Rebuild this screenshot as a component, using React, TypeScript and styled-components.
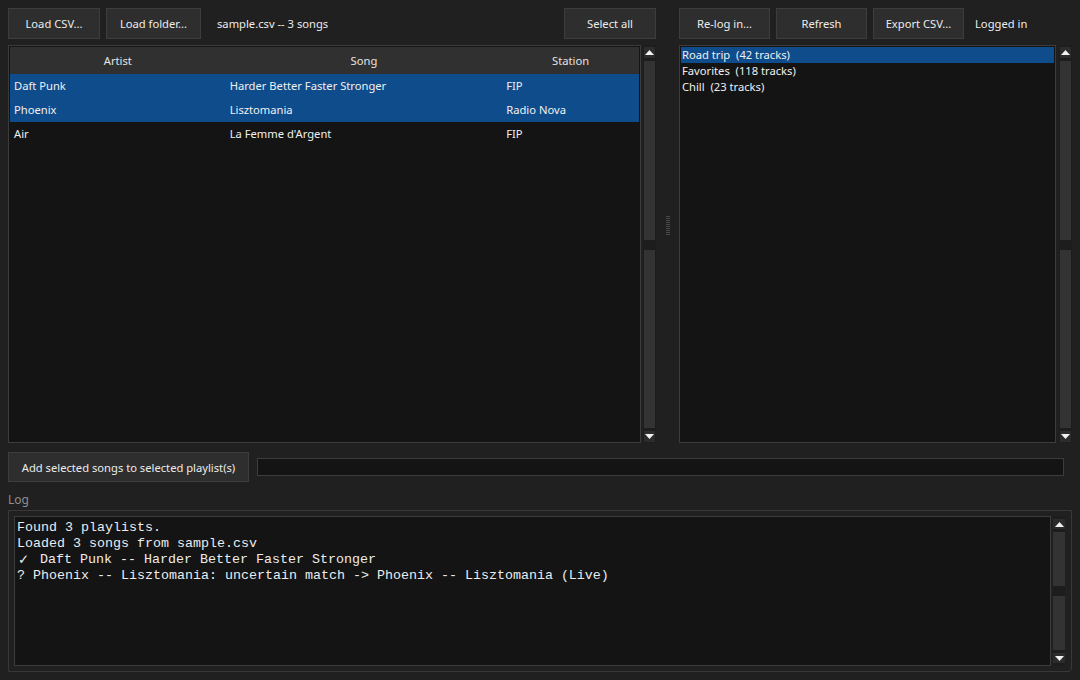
import styled, { createGlobalStyle } from "styled-components";

const GlobalStyle = createGlobalStyle`
  html, body {
    margin: 0;
    padding: 0;
    background: #202020;
  }
  body {
    font-family: "Noto Sans", "Open Sans", sans-serif;
    font-size: 11.2px;
    color: #e8e8e8;
  }
`;

const songs = [
  { artist: "Daft Punk", song: "Harder Better Faster Stronger", station: "FIP", selected: true },
  { artist: "Phoenix", song: "Lisztomania", station: "Radio Nova", selected: true },
  { artist: "Air", song: "La Femme d'Argent", station: "FIP", selected: false },
];

const playlists = [
  { name: "Road trip  (42 tracks)", selected: true },
  { name: "Favorites  (118 tracks)", selected: false },
  { name: "Chill  (23 tracks)", selected: false },
];

const columns = [
  { title: "Artist", width: 216, key: "artist" },
  { title: "Song", width: 277, key: "song" },
  { title: "Station", width: 137, key: "station" },
];

export default function App() {
  return (
    <>
      <GlobalStyle />
      <Window>
        <Panes>
          <Pane $width={648}>
            <Toolbar>
              <Button $width={92}>Load CSV...</Button>
              <Button $width={95}>Load folder...</Button>
              <StatusText $gap={16}>sample.csv -- 3 songs</StatusText>
              <Spacer />
              <Button $width={92}>Select all</Button>
            </Toolbar>
            <ListArea>
              <Frame>
                <HeaderRow>
                  {columns.map((c) => (
                    <HeaderCell key={c.key} $width={c.width}>
                      {c.title}
                    </HeaderCell>
                  ))}
                </HeaderRow>
                {songs.map((s) => (
                  <Row key={s.artist} $selected={s.selected}>
                    {columns.map((c) => (
                      <Cell key={c.key} $width={c.width}>
                        {s[c.key]}
                      </Cell>
                    ))}
                  </Row>
                ))}
              </Frame>
              <Scrollbar />
            </ListArea>
          </Pane>

          <Sash>
            <Grip />
          </Sash>

          <Pane $width={393}>
            <Toolbar>
              <Button $width={91}>Re-log in...</Button>
              <Button $width={91} $gap={7}>Refresh</Button>
              <Button $width={91} $gap={7}>Export CSV...</Button>
              <StatusText $gap={11}>Logged in</StatusText>
            </Toolbar>
            <ListArea $gap={3}>
              <Frame>
                {playlists.map((p) => (
                  <ListItem key={p.name} $selected={p.selected}>
                    {p.name}
                  </ListItem>
                ))}
              </Frame>
              <Scrollbar />
            </ListArea>
          </Pane>
        </Panes>

        <ActionRow>
          <Button $width={241} $height={30}>
            Add selected songs to selected playlist(s)
          </Button>
          <Progress />
        </ActionRow>

        <LogLabel>Log</LogLabel>
        <LogFrame>
          <LogText>
            <LogLine>Found 3 playlists.</LogLine>
            <LogLine>Loaded 3 songs from sample.csv</LogLine>
            <LogLine>
              <CheckMark>{"\u2713"}</CheckMark>
              {" Daft Punk -- Harder Better Faster Stronger"}
            </LogLine>
            <LogLine>? Phoenix -- Lisztomania: uncertain match -&gt; Phoenix -- Lisztomania (Live)</LogLine>
          </LogText>
          <Scrollbar $small />
        </LogFrame>
      </Window>
    </>
  );
}

function Scrollbar({ $small }: { $small?: boolean }) {
  return (
    <Track $small={$small}>
      <Arrow $small={$small}>
        <svg width="9" height="5" viewBox="0 0 9 5">
          <path d="M0 5 L4.5 0 L9 5 Z" fill="#f2f2f2" />
        </svg>
      </Arrow>
      <Segment />
      <SegmentGap />
      <Segment />
      <Arrow $small={$small}>
        <svg width="9" height="5" viewBox="0 0 9 5">
          <path d="M0 0 L4.5 5 L9 0 Z" fill="#f2f2f2" />
        </svg>
      </Arrow>
    </Track>
  );
}

const Window = styled.div`
  width: 1080px;
  height: 680px;
  box-sizing: border-box;
  padding: 8px;
  display: flex;
  flex-direction: column;
  overflow: hidden;
`;

const Panes = styled.div`
  display: flex;
  height: 435px;
`;

const Pane = styled.div<{ $width: number }>`
  width: ${(p) => p.$width}px;
  display: flex;
  flex-direction: column;
  gap: 6px;
`;

const Toolbar = styled.div`
  display: flex;
  align-items: center;
  height: 31px;
  flex-shrink: 0;
`;

const Button = styled.div<{ $width: number; $height?: number; $gap?: number }>`
  width: ${(p) => p.$width}px;
  height: ${(p) => p.$height ?? 31}px;
  box-sizing: border-box;
  border: 1px solid #3d3d3d;
  background: #2e2e2e;
  display: flex;
  align-items: center;
  justify-content: center;
  white-space: nowrap;
  color: #ececec;
  flex-shrink: 0;
  & + & {
    margin-left: ${(p) => p.$gap ?? 6}px;
  }
`;

const StatusText = styled.span<{ $gap: number }>`
  margin-left: ${(p) => p.$gap}px;
  white-space: nowrap;
  color: #ececec;
`;

const Spacer = styled.div`
  flex: 1;
`;

const ListArea = styled.div<{ $gap?: number }>`
  flex: 1;
  display: flex;
  gap: ${(p) => p.$gap ?? 2}px;
  min-height: 0;
`;

const Frame = styled.div`
  flex: 1;
  box-sizing: border-box;
  border: 1px solid #3c3c3c;
  background: #141414;
  padding: 1px;
  overflow: hidden;
`;

const HeaderRow = styled.div`
  display: flex;
  height: 27px;
  background: #303030;
`;

const HeaderCell = styled.div<{ $width: number }>`
  width: ${(p) => p.$width}px;
  display: flex;
  align-items: center;
  justify-content: center;
  color: #e4e4e4;
`;

const Row = styled.div<{ $selected: boolean }>`
  display: flex;
  height: 24px;
  background: ${(p) => (p.$selected ? "#0f4c8b" : "transparent")};
`;

const Cell = styled.div<{ $width: number }>`
  width: ${(p) => p.$width}px;
  box-sizing: border-box;
  padding-left: 4px;
  padding-bottom: 1px;
  display: flex;
  align-items: center;
  white-space: nowrap;
  color: #f0f0f0;
`;

const ListItem = styled.div<{ $selected: boolean }>`
  height: 16px;
  line-height: 16px;
  padding-left: 1px;
  white-space: pre;
  color: #f0f0f0;
  background: ${(p) => (p.$selected ? "#0f4c8b" : "transparent")};
`;

const Track = styled.div<{ $small?: boolean }>`
  width: ${(p) => (p.$small ? 12 : 13)}px;
  box-sizing: border-box;
  padding: ${(p) => (p.$small ? "3px 0 3px 0" : "2px 1px 1px 1px")};
  display: flex;
  flex-direction: column;
  gap: 3px;
  flex-shrink: 0;
  background: #1d1d1d;
`;

const Arrow = styled.div<{ $small?: boolean }>`
  height: ${(p) => (p.$small ? 10 : 11)}px;
  background: #2c2c2c;
  display: flex;
  align-items: center;
  justify-content: center;
  flex-shrink: 0;
`;

const Segment = styled.div`
  flex: 1;
  background: #333333;
`;

const SegmentGap = styled.div`
  height: 4px;
  flex-shrink: 0;
`;

const Sash = styled.div`
  width: 23px;
  display: flex;
  align-items: center;
  justify-content: center;
`;

const Grip = styled.div`
  width: 4px;
  height: 19px;
  background: repeating-linear-gradient(
    to bottom,
    #4a4a4a 0px,
    #4a4a4a 1px,
    transparent 1px,
    transparent 2px
  );
`;

const ActionRow = styled.div`
  display: flex;
  align-items: center;
  margin-top: 9px;
  height: 30px;
  flex-shrink: 0;
`;

const Progress = styled.div`
  flex: 1;
  height: 18px;
  margin-left: 8px;
  margin-right: 8px;
  box-sizing: border-box;
  border: 1px solid #3c3c3c;
  background: #141414;
`;

const LogLabel = styled.div`
  margin-top: 8px;
  height: 20px;
  line-height: 20px;
  font-size: 12px;
  color: #8e8e8e;
  flex-shrink: 0;
`;

const LogFrame = styled.div`
  flex: 1;
  box-sizing: border-box;
  border: 1px solid #383838;
  border-radius: 0 0 4px 0;
  padding: 5px 6px 5px 5px;
  display: flex;
  gap: 2px;
  min-height: 0;
`;

const LogText = styled.div`
  flex: 1;
  box-sizing: border-box;
  border: 1px solid #3c3c3c;
  background: #141414;
  padding: 3px 2px 2px 2px;
  font-family: "Liberation Mono", "DejaVu Sans Mono", monospace;
  font-size: 13.33px;
  color: #ececec;
  overflow: hidden;
`;

const LogLine = styled.div`
  height: 16px;
  line-height: 16px;
  white-space: pre;
  overflow: hidden;
`;

const CheckMark = styled.span`
  display: inline-block;
  width: 15px;
  padding-left: 1px;
  box-sizing: border-box;
  line-height: 16px;
  vertical-align: top;
  font-family: "DejaVu Sans", sans-serif;
`;
